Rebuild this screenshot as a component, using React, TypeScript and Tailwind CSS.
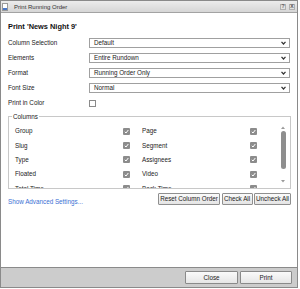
import React from 'react';

const FONT = { fontFamily: '"Liberation Sans", Arial, sans-serif' };

const SELECTS = [
  { label: 'Column Selection', value: 'Default' },
  { label: 'Elements', value: 'Entire Rundown' },
  { label: 'Format', value: 'Running Order Only' },
  { label: 'Font Size', value: 'Normal' },
];

const COLUMNS: [string, string][] = [
  ['Group', 'Page'],
  ['Slug', 'Segment'],
  ['Type', 'Assignees'],
  ['Floated', 'Video'],
  ['Total Time', 'Back Time'],
];

function Chevron() {
  return (
    <svg width="5" height="4" viewBox="0 0 5 4" className="shrink-0">
      <path d="M0.5 0.8 L2.5 3 L4.5 0.8" fill="none" stroke="#333" strokeWidth="1.2" />
    </svg>
  );
}

function Check({ checked }: { checked: boolean }) {
  if (!checked) {
    return <div className="w-[7px] h-[7px] border border-[#8a8a8a] bg-white shrink-0" />;
  }
  return (
    <div className="w-[7px] h-[7px] bg-[#8c8c8c] rounded-[1px] shrink-0 flex items-center justify-center">
      <svg width="5" height="5" viewBox="0 0 5 5">
        <path d="M0.8 2.8 L2 4 L4.3 1" fill="none" stroke="#fff" strokeWidth="1" />
      </svg>
    </div>
  );
}

function SmallBtn({ children, w }: { children: React.ReactNode; w: string }) {
  return (
    <div
      className={`${w} h-[12px] border border-[#8f8f8f] rounded-[1px] bg-gradient-to-b from-[#fbfbfb] to-[#e4e4e4] flex items-center justify-center text-[6.3px] text-[#222]`}
    >
      {children}
    </div>
  );
}

export default function App() {
  return (
    <div className="w-[300px] h-[289px] bg-white" style={FONT}>
      <div className="w-[298px] h-[288px] border border-[#8a8a8a] flex flex-col bg-white">
        {/* title bar */}
        <div className="h-[12px] shrink-0 bg-gradient-to-b from-[#ececec] to-[#d6d6d6] border-b border-[#a3a3a3] flex items-center pl-[1px] pr-[2px]">
          <div className="w-[6px] h-[8px] border border-[#9a9a9a] bg-white flex flex-col justify-end">
            <div className="h-[2px] bg-[#4a78c8]" />
          </div>
          <div className="ml-[6px] text-[6px] text-[#333] leading-none">Print Running Order</div>
          <div className="ml-auto flex gap-[3px]">
            <div className="w-[6px] h-[6px] border border-[#b0b0b0] bg-[#e2e2e2] text-[5px] leading-none text-[#555] flex items-center justify-center font-bold">?</div>
            <div className="w-[6px] h-[6px] border border-[#b0b0b0] bg-[#e2e2e2] text-[5px] leading-none text-[#555] flex items-center justify-center font-bold">X</div>
          </div>
        </div>

        {/* body */}
        <div className="flex-1 flex flex-col px-[7px]">
          <div className="mt-[9px] h-[9px] flex items-center text-[7.4px] font-bold text-[#111]">Print 'News Night 9'</div>
          <div className="mt-[7px] flex flex-col gap-[5px]">
            {SELECTS.map((s) => (
              <div key={s.label} className="flex items-center h-[10px]">
                <div className="w-[81px] text-[6.3px] text-[#222]">{s.label}</div>
                <div className="w-[201px] h-[10px] border border-[#a0a0a0] bg-white flex items-center pl-[4px] pr-[3px] text-[6.3px] text-[#222]">
                  <span className="flex-1">{s.value}</span>
                  <Chevron />
                </div>
              </div>
            ))}
            <div className="flex items-center h-[10px]">
              <div className="w-[81px] text-[6.3px] text-[#222]">Print in Color</div>
              <Check checked={false} />
            </div>
          </div>

          {/* columns fieldset */}
          <div className="relative mt-[8px] w-[283px] h-[73px] border border-[#c8c8c8]">
            <div className="absolute -top-[4px] left-[3px] bg-white px-[1px] text-[6.3px] leading-[7px] text-[#222]">Columns</div>
            <div className="flex h-full">
              <div className="flex-1 overflow-hidden pt-[7px]">
                {COLUMNS.map(([a, b]) => (
                  <div key={a} className="h-[14.3px] flex items-center pl-[6px] text-[6.3px] text-[#222]">
                    <div className="w-[108px]">{a}</div>
                    <Check checked />
                    <div className="w-[12px]" />
                    <div className="w-[108px]">{b}</div>
                    <Check checked />
                  </div>
                ))}
              </div>
              <div className="w-[6px] mr-[4px] flex flex-col items-center pt-[9px] pb-[5px]">
                <svg width="4" height="3" viewBox="0 0 4 3"><path d="M0 3 L2 0.5 L4 3Z" fill="#9a9a9a" /></svg>
                <div className="mt-[2px] w-[5px] h-[38px] rounded-[3px] bg-[#8e8e8e]" />
                <div className="flex-1" />
                <svg width="4" height="3" viewBox="0 0 4 3"><path d="M0 0 L2 2.5 L4 0Z" fill="#9a9a9a" /></svg>
              </div>
            </div>
          </div>

          <div className="mt-[4px] flex items-start">
            <div className="mt-[4px] text-[6.3px] text-[#3a6fd4]">Show Advanced Settings...</div>
            <div className="ml-auto flex gap-[1.5px] mr-[-1px]">
              <SmallBtn w="w-[62px]">Reset Column Order</SmallBtn>
              <SmallBtn w="w-[31px]">Check All</SmallBtn>
              <SmallBtn w="w-[37px]">Uncheck All</SmallBtn>
            </div>
          </div>
        </div>

        {/* footer */}
        <div className="h-[20px] shrink-0 bg-[#cccccc] border-t border-[#8a8a8a] flex items-center justify-end gap-[2px] pr-[5px]">
          <div className="w-[53px] h-[13px] border border-[#8a8a8a] rounded-[1px] bg-gradient-to-b from-[#fafafa] to-[#e6e6e6] flex items-center justify-center text-[6.3px] text-[#222]">Close</div>
          <div className="w-[52px] h-[13px] border border-[#8a8a8a] rounded-[1px] bg-gradient-to-b from-[#fafafa] to-[#e6e6e6] flex items-center justify-center text-[6.3px] text-[#222]">Print</div>
        </div>
      </div>
    </div>
  );
}
